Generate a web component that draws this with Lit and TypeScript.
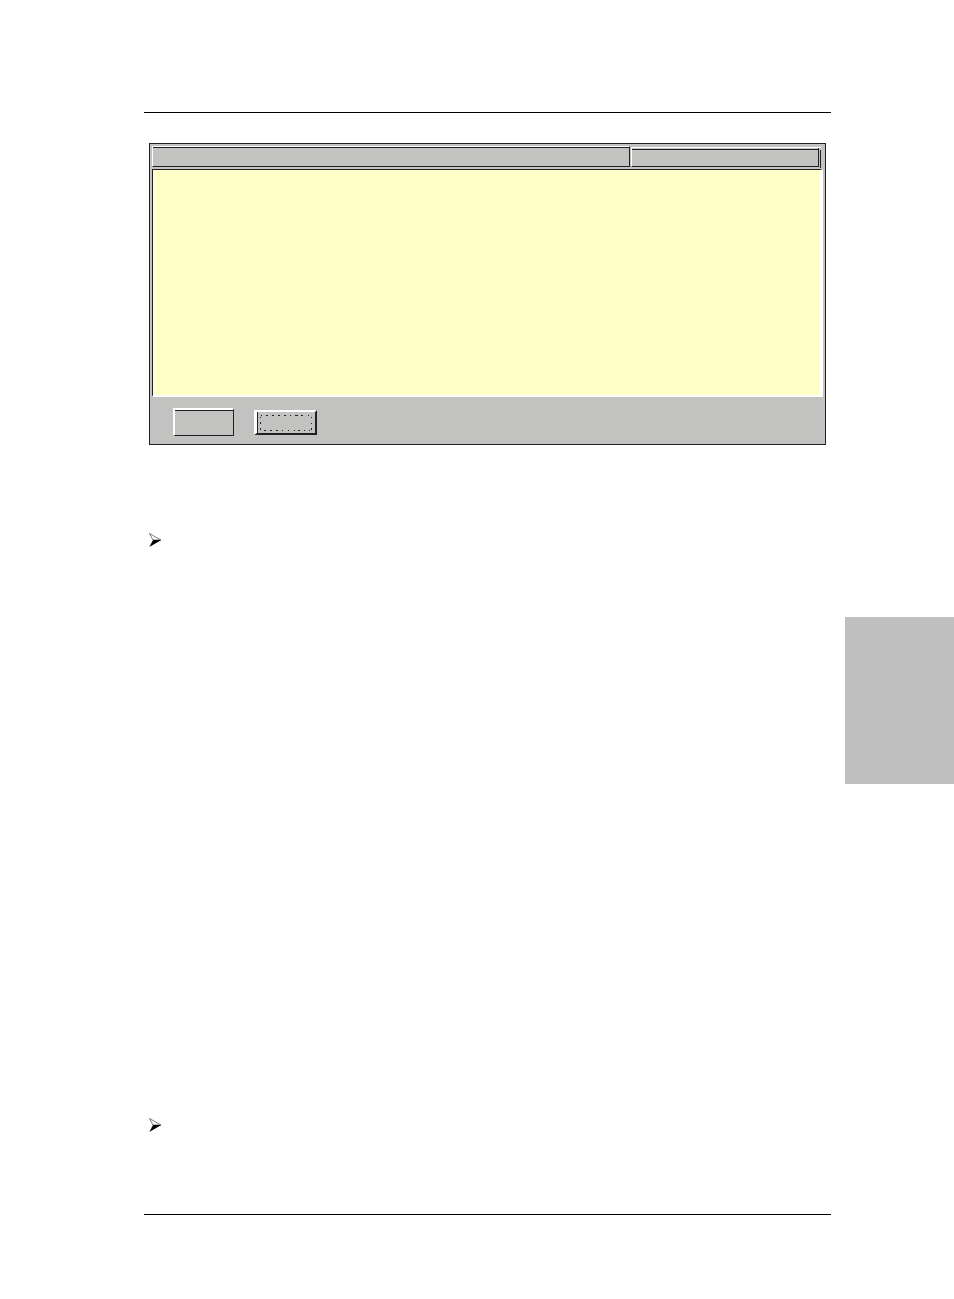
import { LitElement, html, css } from "lit";
import { customElement } from "lit/decorators.js";

@customElement("arrow-bullet")
class ArrowBullet extends LitElement {
  static styles = css`
    :host { display: block; width: 14px; height: 15px; }
    svg { display: block; }
  `;
  render() {
    return html`<svg width="14" height="15" viewBox="0 0 14 15" aria-hidden="true">
      <path d="M0.5 0.5 L11.8 7 L4 7 Z" fill="#fff" stroke="#222" stroke-width="0.6" />
      <path d="M0.3 14 L4 7 L12.3 7 Z" fill="#000" />
    </svg>`;
  }
}

@customElement("dialog-panel")
class DialogPanel extends LitElement {
  static styles = css`
    :host { --face: #c2c2c0; --ink: #231f20; display: block; }
    button {
      box-sizing: border-box;
      margin: 0;
      padding: 0;
      background: var(--face);
      border-radius: 0;
      font: 12px "Liberation Sans", sans-serif;
    }
    .panel {
      background: var(--face);
      border: 1px solid var(--ink);
      padding: 2px;
    }
    .tabs {
      display: grid;
      grid-template-columns: minmax(0, 478fr) minmax(0, 190fr);
      gap: 1px;
      padding-right: 2px;
      align-items: start;
    }
    .tab {
      height: 21px;
      border: 1px solid var(--ink);
      border-top-color: #fff;
      border-left-color: #fff;
      box-shadow: inset 0 1px 0 var(--ink);
    }
    .slot {
      box-sizing: border-box;
      height: 21px;
      margin-top: 1px;
      padding-right: 1px;
      border-top: 1px solid #fff;
      background: linear-gradient(var(--ink), var(--ink)) right bottom / 1px 18px no-repeat;
      display: flex;
    }
    .shade {
      flex: 1;
      height: 19px;
      margin-right: 1px;
      border-width: 0 1px 1px 1px;
      border-style: solid;
      border-color: var(--ink) var(--ink) var(--ink) #fff;
      box-shadow: inset 0 1px 0 var(--face), inset 0 2px 0 var(--ink);
    }
    .page {
      height: 225px;
      margin-top: 1px;
      background: #ffffc8;
      border: solid;
      border-width: 1px 3px 2px 1px;
      border-color: var(--ink) #fff #fff var(--ink);
    }
    .actions { display: flex; gap: 20px; padding: 11px 0 6px 21px; }
    .flat {
      width: 61px;
      height: 28px;
      border: solid;
      border-width: 2px 1px 1px 2px;
      border-color: #fff var(--ink) var(--ink) #fff;
      box-shadow: inset 0 1px 0 var(--ink);
    }
    .focused {
      width: 63px;
      height: 25px;
      margin-top: 2px;
      border: solid;
      border-width: 2px 2px 2px 3px;
      border-color: #fff var(--ink) var(--ink) #fff;
      box-shadow: inset 1px 0 0 var(--ink);
    }
    .focused svg { display: block; margin: 1px 0 0 3px; }
  `;
  render() {
    return html`<section class="panel">
      <div class="tabs">
        <button class="tab" aria-label="First tab"></button>
        <div class="slot"><button class="shade" aria-label="Second tab"></button></div>
      </div>
      <div class="page"></div>
      <div class="actions">
        <button class="flat" aria-label="First action"></button>
        <button class="focused" aria-label="Second action">
          <svg width="52" height="16" viewBox="0 0 52 16" shape-rendering="crispEdges" aria-hidden="true">
            <path fill="none" stroke="#231f20" stroke-width="1"
              d="M1 .5h1 M6 .5h2 M12 .5h2 M18 .5h2 M24 .5h2 M30 .5h1 M35 .5h3 M41 .5h2 M48 .5h1
                 M4 15.5h2 M10 15.5h2 M16 15.5h2 M22 15.5h1 M28 15.5h1 M34 15.5h1 M38 15.5h2 M44 15.5h1 M49 15.5h1
                 M.5 2v1 M.5 7v2 M.5 13v2 M51.5 2v1 M51.5 8v1 M51.5 13v2" />
          </svg>
        </button>
      </div>
    </section>`;
  }
}

@customElement("app-root")
class AppRoot extends LitElement {
  static styles = css`
    :host { display: block; background: #fff; }
    .sheet { display: grid; grid-template-columns: minmax(0, 1fr) 109px; }
    .body { padding: 112px 14px 84px 144px; }
    .rule { height: 1px; margin: 0; border: 0; background: #000; }
    .content { padding: 30px 5px 0; }
    .steps { list-style: none; margin: 88px 0 0; padding: 0; }
    .step { height: 585px; }
    .step:last-child { height: 96px; }
    .thumb { height: 167px; margin-top: 617px; background: #bfbfbf; }
  `;
  render() {
    return html`<div class="sheet">
      <main class="body">
        <hr class="rule" />
        <div class="content">
          <dialog-panel></dialog-panel>
          <ul class="steps">
            <li class="step"><arrow-bullet></arrow-bullet></li>
            <li class="step"><arrow-bullet></arrow-bullet></li>
          </ul>
        </div>
        <hr class="rule" />
      </main>
      <aside class="thumb"></aside>
    </div>`;
  }
}
